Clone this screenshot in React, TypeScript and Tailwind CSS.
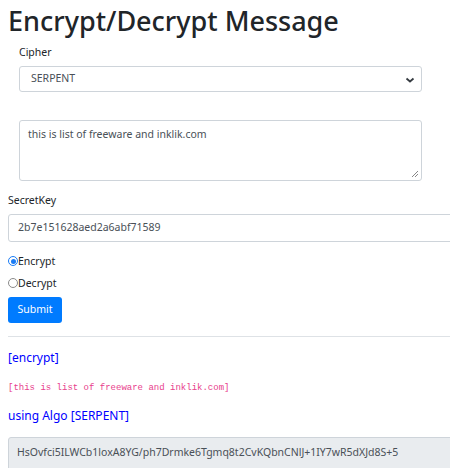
export default function App() {
  return (
    <div className="w-[450px] h-[468px] overflow-hidden bg-white px-2 text-[#212529] [font-family:'Noto_Sans',sans-serif]">
      <h1 className="text-[27px] leading-[36px] font-medium mt-[3px]">Encrypt/Decrypt Message</h1>

      <div className="px-[11px] w-[434px]">
        <div className="text-[10.5px] leading-[16px] mt-[5px]">Cipher</div>
        <div className="relative mt-[6px] h-[26px] w-[403px] rounded-[3px] border border-[#ced4da] flex items-center pl-[11px] text-[10.5px] text-[#495057]">
          SERPENT
          <svg className="absolute right-[6px] top-[9px]" width="10" height="8" viewBox="0 0 10 8">
            <path d="M1.5 2.5 L5 5.5 L8.5 2.5" fill="none" stroke="#343a40" strokeWidth="1.8" />
          </svg>
        </div>
        <div className="relative mt-[28px] h-[61px] w-[403px] rounded-[3px] border border-[#ced4da] pl-[8px] pt-[4px] text-[10.5px] leading-[18px] text-[#495057]">
          this is list of freeware and inklik.com
          <svg className="absolute right-[2px] bottom-[2px]" width="8" height="8" viewBox="0 0 8 8">
            <path d="M7 1 L1 7 M7 4 L4 7" stroke="#888" strokeWidth="1" />
          </svg>
        </div>
      </div>

      <div className="text-[10.5px] leading-[16px] mt-[11px]">SecretKey</div>
      <div className="mt-[6px] h-[28px] w-[460px] rounded-l-[3px] border border-[#ced4da] flex items-center pl-[9px] text-[10.5px] text-[#495057]">
        2b7e151628aed2a6abf71589
      </div>

      <div className="mt-[12px] flex flex-col gap-[8px] text-[10.5px] leading-[14px]">
        <label className="flex items-center">
          <span className="w-[10px] h-[10px] rounded-full border-[1.5px] border-[#1a7cf5] bg-white flex items-center justify-center">
            <span className="w-[5px] h-[5px] rounded-full bg-[#1a7cf5]" />
          </span>
          <span>Encrypt</span>
        </label>
        <label className="flex items-center">
          <span className="w-[10px] h-[10px] rounded-full border border-[#8a8a8a]" />
          <span>Decrypt</span>
        </label>
      </div>

      <button className="mt-[7px] h-[26px] w-[54px] rounded-[3px] bg-[#007bff] text-white text-[10.5px] flex items-center justify-center">
        Submit
      </button>

      <div className="mt-[13px] w-[450px] border-t border-[#dee2e6]" />

      <div className="mt-[12px] text-[12px] leading-[18px] text-[#0000ff]">[encrypt]</div>
      <div className="mt-[15px] text-[9px] leading-[12px] text-[#e83e8c] [font-family:'Liberation_Mono',monospace]">
        [this is list of freeware and inklik.com]
      </div>
      <div className="mt-[13px] text-[12px] leading-[18px] text-[#0000ff]">using Algo [SERPENT]</div>
      <div className="mt-[12px] h-[40px] w-[460px] rounded-l-[3px] border border-[#ced4da] bg-[#e9ecef] pl-[8px] pt-[5px] text-[10.5px] leading-[18px] text-[#495057]">
        HsOvfci5ILWCb1loxA8YG/ph7Drmke6Tgmq8t2CvKQbnCNlJ+1IY7wR5dXJd8S+5
      </div>
    </div>
  );
}
